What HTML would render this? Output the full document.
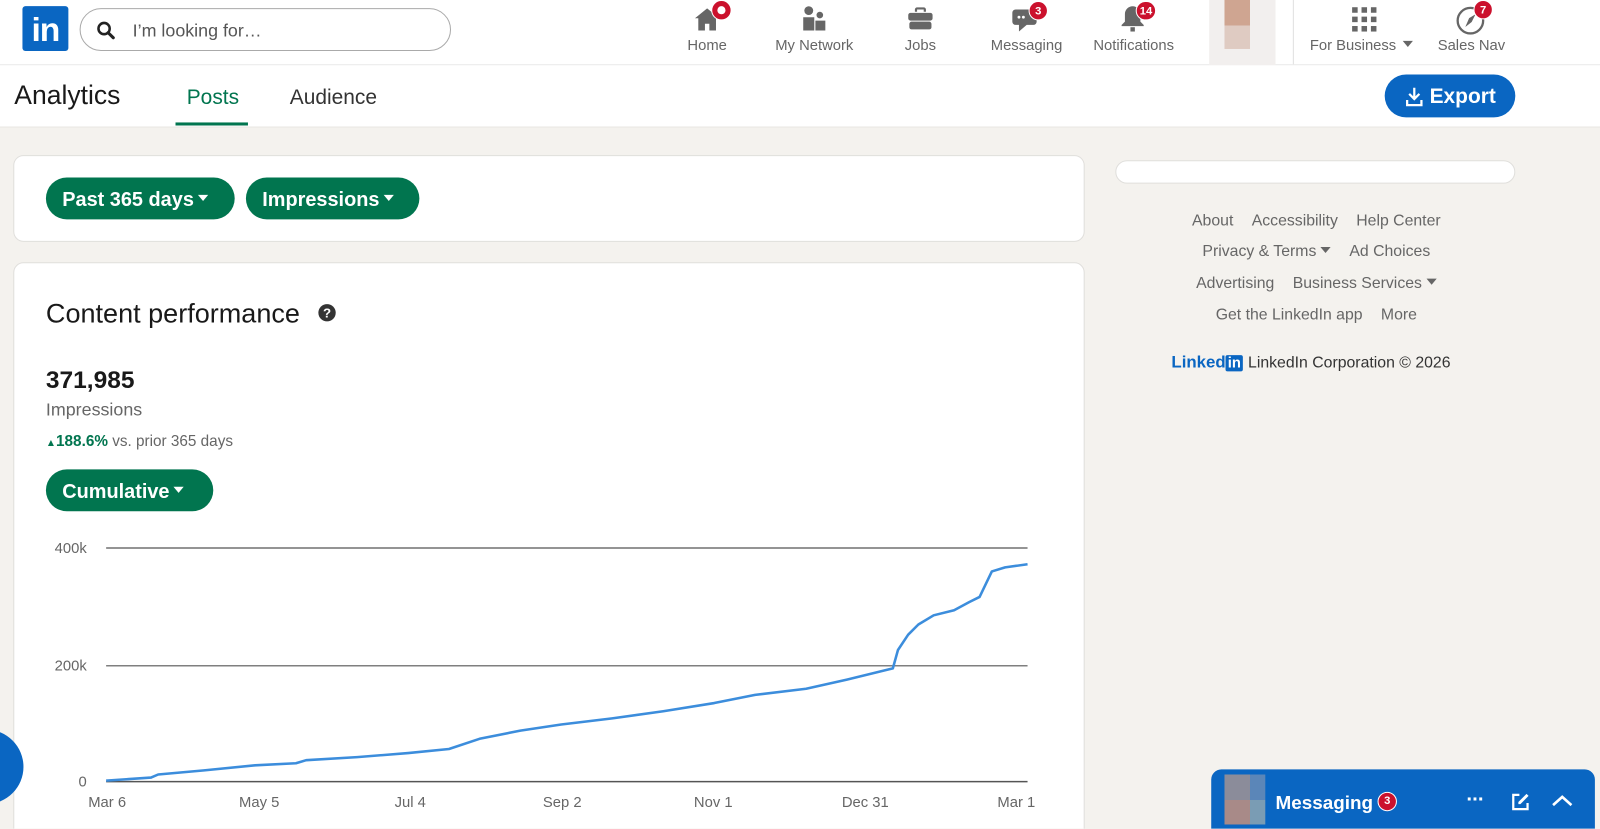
<!DOCTYPE html>
<html><head><meta charset="utf-8"><style>
*{box-sizing:border-box;margin:0;padding:0}
html,body{width:1600px;height:828px;overflow:hidden;background:#f4f2ee;font-family:"Liberation Sans",sans-serif}
#w{position:absolute;left:0;top:0;width:1568px;height:812px;transform:scale(1.020408);transform-origin:0 0;overflow:hidden}
.a{position:absolute}
.nav{left:0;top:0;width:1568px;height:64px;background:#fff;border-bottom:1px solid #e8e8e8}
.ni{position:absolute;top:37px;font-size:14.5px;color:#666;transform:translateX(-50%);white-space:nowrap}
.badge{position:absolute;background:#cb112d;color:#fff;font-size:11px;font-weight:bold;border-radius:10px;height:19px;min-width:19px;text-align:center;line-height:19px;border:1px solid #fff;padding:0 3px}
.btn{position:absolute;background:#01754f;color:#fff;font-weight:bold;font-size:19.5px;border-radius:21px;height:41px;line-height:45px;padding-left:16px}
.tri{display:inline-block;width:0;height:0;border-left:5px solid transparent;border-right:5px solid transparent;border-top:6px solid currentColor;vertical-align:middle;margin-left:4px;position:relative;top:-3px}
.card{position:absolute;background:#fff;border:1px solid #e0dfdc;border-radius:10px}
.ft{position:absolute;left:1090px;width:400px;text-align:center;font-size:15.5px;color:#666}
.ft span{margin:0 9px}
.xl{position:absolute;top:779px;font-size:14.5px;color:#666;transform:translateX(-50%)}
.yl{position:absolute;font-size:14.5px;color:#666;right:1483px}
</style></head><body><div id="w">
<div class="a nav"></div>
<div class="a" style="left:22px;top:6px;width:45px;height:44px;background:#0a66c2;border-radius:3px;color:#fff;font-weight:bold;font-size:33px;line-height:46px;text-align:center;letter-spacing:-1px">in</div>
<div class="a" style="left:78px;top:8px;width:364px;height:42px;border:1px solid #aaa;border-radius:21px"></div>
<svg class="a" style="left:94px;top:20px" width="20" height="20" viewBox="0 0 20 20"><circle cx="8" cy="8" r="5.5" fill="none" stroke="#222" stroke-width="2.5"/><line x1="12" y1="12" x2="17" y2="17" stroke="#222" stroke-width="3" stroke-linecap="round"/></svg>
<div class="a" style="left:130px;top:20px;font-size:17.5px;color:#555">I’m looking for…</div>

<svg class="a" style="left:680px;top:6px" width="26" height="26" viewBox="0 0 24 24"><path d="M12 2L1 11h3v11h6v-6h4v6h6V11h3z" fill="#666"/></svg>
<div class="a" style="left:697px;top:0;width:20px;height:20px;border-radius:50%;background:#cb112d;border:1px solid #fff"><div style="margin:5px;width:8px;height:8px;border-radius:50%;background:#fff"></div></div>
<div class="ni" style="left:693px">Home</div>
<svg class="a" style="left:785px;top:5px" width="26" height="26" viewBox="0 0 24 24" fill="#666"><circle cx="7" cy="5" r="4"/><path d="M2 11h10v12H2z"/><circle cx="17" cy="9" r="3"/><path d="M13 14h9v9h-9z"/></svg>
<div class="ni" style="left:798px">My Network</div>
<svg class="a" style="left:889px;top:5px" width="26" height="26" viewBox="0 0 24 24" fill="#666"><path d="M9 2h6a2 2 0 012 2v2h-2V4H9v2H7V4a2 2 0 012-2z"/><rect x="1" y="7" width="22" height="7" rx="2"/><rect x="2" y="15" width="20" height="7" rx="2"/></svg>
<div class="ni" style="left:902px">Jobs</div>
<svg class="a" style="left:991px;top:6px" width="26" height="26" viewBox="0 0 24 24" fill="#666"><path d="M4 3h16a3 3 0 013 3v8a3 3 0 01-3 3H14l-7 6v-6H4a3 3 0 01-3-3V6a3 3 0 013-3z"/><circle cx="7" cy="10" r="1.3" fill="#fff"/><circle cx="11" cy="10" r="1.3" fill="#fff"/></svg>
<div class="badge" style="left:1008px;top:1px">3</div>
<div class="ni" style="left:1006px">Messaging</div>
<svg class="a" style="left:1097px;top:5px" width="26" height="26" viewBox="0 0 24 24" fill="#666"><path d="M12 1a7 7 0 017 7v7l3 3v1H2v-1l3-3V8a7 7 0 017-7z"/><rect x="10" y="20" width="4" height="4"/></svg>
<div class="badge" style="left:1113px;top:1px">14</div>
<div class="ni" style="left:1111px">Notifications</div>
<div class="a" style="left:1185px;top:0;width:65px;height:64px;background:#f2efee"></div>
<div class="a" style="left:1200px;top:0;width:25px;height:25px;background:#cfa591"></div>
<div class="a" style="left:1200px;top:25px;width:25px;height:23px;background:#dfcbc2"></div>
<div class="a" style="left:1267px;top:0;width:1px;height:63px;background:#e0e0e0"></div>
<svg class="a" style="left:1324px;top:6px" width="26" height="26" viewBox="0 0 24 24" fill="#666"><rect x="1" y="1" width="5" height="5"/><rect x="9.5" y="1" width="5" height="5"/><rect x="18" y="1" width="5" height="5"/><rect x="1" y="9.5" width="5" height="5"/><rect x="9.5" y="9.5" width="5" height="5"/><rect x="18" y="9.5" width="5" height="5"/><rect x="1" y="18" width="5" height="5"/><rect x="9.5" y="18" width="5" height="5"/><rect x="18" y="18" width="5" height="5"/></svg>
<div class="ni" style="left:1334px">For Business <span class="tri" style="margin-left:2px;top:-2px"></span></div>
<svg class="a" style="left:1426px;top:4px" width="30" height="30" viewBox="0 0 24 24"><circle cx="12" cy="13" r="10" fill="none" stroke="#666" stroke-width="1.8"/><path d="M8 18l3-7 5-3-3 6z" fill="#666"/></svg>
<div class="badge" style="left:1444px;top:0">7</div>
<div class="ni" style="left:1442px">Sales Nav</div>

<div class="a" style="left:0;top:64px;width:1568px;height:61px;background:#fff;border-bottom:1px solid #e8e6e2"></div>
<div class="a" style="left:14px;top:78px;font-size:26px;color:#191919">Analytics</div>
<div class="a" style="left:183px;top:84px;font-size:20.5px;color:#01754f">Posts</div>
<div class="a" style="left:172px;top:120px;width:71px;height:3px;background:#01754f"></div>
<div class="a" style="left:284px;top:84px;font-size:20.5px;color:#333">Audience</div>
<div class="a" style="left:1357px;top:73px;width:128px;height:42px;background:#0a66c2;border-radius:21px;color:#fff;font-size:20.5px;font-weight:bold;line-height:44px;padding-left:44px">Export</div>
<svg class="a" style="left:1377px;top:85px" width="18" height="20" viewBox="0 0 18 20"><path d="M9 1v11M4 7l5 5 5-5M2 13v5h14v-5" fill="none" stroke="#fff" stroke-width="2.2"/></svg>

<div class="card" style="left:13px;top:152px;width:1050px;height:85px"></div>
<div class="btn" style="left:45px;top:174px;width:185px">Past 365 days<span class="tri"></span></div>
<div class="btn" style="left:241px;top:174px;width:170px">Impressions<span class="tri"></span></div>

<div class="card" style="left:13px;top:257px;width:1050px;height:580px"></div>
<div class="a" style="left:45px;top:292px;font-size:26.5px;color:#191919">Content performance</div>
<div class="a" style="left:312px;top:298px;width:17px;height:17px;border-radius:50%;background:#333;color:#fff;font-size:13px;font-weight:bold;text-align:center;line-height:17px">?</div>
<div class="a" style="left:45px;top:359px;font-size:24px;font-weight:bold;color:#191919">371,985</div>
<div class="a" style="left:45px;top:391px;font-size:17.5px;color:#666">Impressions</div>
<div class="a" style="left:45px;top:424px;font-size:15px;color:#666"><span style="color:#01754f;font-weight:bold"><span style="font-size:10px">▲</span>188.6%</span> vs. prior 365 days</div>
<div class="btn" style="left:45px;top:460px;width:164px">Cumulative<span class="tri"></span></div>

<svg class="a" style="left:0;top:0" width="1568" height="812">
<line x1="104" y1="537" x2="1007" y2="537" stroke="#555" stroke-width="1.2"/>
<line x1="104" y1="652.5" x2="1007" y2="652.5" stroke="#555" stroke-width="1.2"/>
<line x1="104" y1="766" x2="1007" y2="766" stroke="#555" stroke-width="1.5"/>
<polyline fill="none" stroke="#3c8ddc" stroke-width="2.5" stroke-linejoin="round" points="104,765 148,762 155,759 200,755 250,750 290,748 300,745 350,742 400,738 440,734 470,724 510,716 550,710 600,704 650,697 700,689 740,681 790,675 830,666 875,655 880,637 890,622 900,612 915,603 935,598 950,590 960,585 972,560 985,556 1007,553"/>
</svg>
<div class="yl" style="top:530px">400k</div>
<div class="yl" style="top:645px">200k</div>
<div class="yl" style="top:759px">0</div>
<div class="xl" style="left:105px">Mar 6</div>
<div class="xl" style="left:254px">May 5</div>
<div class="xl" style="left:402px">Jul 4</div>
<div class="xl" style="left:551px">Sep 2</div>
<div class="xl" style="left:699px">Nov 1</div>
<div class="xl" style="left:848px">Dec 31</div>
<div class="xl" style="left:996px">Mar 1</div>

<div class="card" style="left:1093px;top:157px;width:392px;height:23px;border-radius:12px"></div>
<div class="ft" style="top:208px"><span>About</span><span>Accessibility</span><span>Help Center</span></div>
<div class="ft" style="top:238px"><span>Privacy &amp; Terms <span class="tri" style="margin:0;top:-2px"></span></span><span>Ad Choices</span></div>
<div class="ft" style="top:269px"><span>Advertising</span><span>Business Services <span class="tri" style="margin:0;top:-2px"></span></span></div>
<div class="ft" style="top:300px"><span>Get the LinkedIn app</span><span>More</span></div>
<div class="a" style="left:1148px;top:346px;font-size:15.5px;color:#333;white-space:nowrap"><b style="color:#0a66c2;font-size:16.5px">Linked</b><b style="background:#0a66c2;color:#fff;font-size:14.5px;padding:0 2px;border-radius:2px;margin-right:5px">in</b>LinkedIn Corporation © 2026</div>

<div class="a" style="left:-50px;top:715px;width:73px;height:73px;border-radius:50%;background:#0a66c2"></div>

<div class="a" style="left:1187px;top:754px;width:376px;height:70px;background:#0a66c2;border-radius:10px 10px 0 0"></div>
<div class="a" style="left:1200px;top:759px;width:25px;height:25px;background:#8b8c9a"></div>
<div class="a" style="left:1225px;top:759px;width:15px;height:25px;background:#5b86b8"></div>
<div class="a" style="left:1200px;top:784px;width:25px;height:24px;background:#a88a88"></div>
<div class="a" style="left:1225px;top:784px;width:15px;height:24px;background:#7a9cb4"></div>
<div class="a" style="left:1250px;top:776px;font-size:18.5px;font-weight:bold;color:#fff">Messaging</div>
<div class="a" style="left:1350px;top:776px;width:19px;height:19px;border-radius:50%;background:#cb112d;border:1px solid #fff;color:#fff;font-size:11px;font-weight:bold;text-align:center;line-height:17px">3</div>
<div class="a" style="left:1437px;top:773px;font-size:20px;font-weight:bold;color:#fff;letter-spacing:-1px">···</div>
<svg class="a" style="left:1480px;top:776px" width="20" height="20" viewBox="0 0 20 20"><path d="M9 3H3v14h14v-6" fill="none" stroke="#fff" stroke-width="2.2"/><path d="M16 2l2 2-8 8H8v-2z" fill="#fff"/></svg>
<svg class="a" style="left:1520px;top:778px" width="22" height="14" viewBox="0 0 22 14"><path d="M2 11l9-8 9 8" fill="none" stroke="#fff" stroke-width="2.6"/></svg>
</div></body></html>
